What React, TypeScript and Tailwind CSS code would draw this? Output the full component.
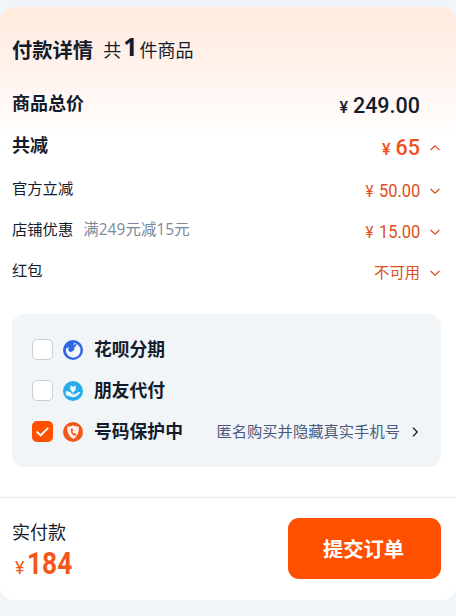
import type { ReactNode } from "react";

function Chevron({ className }: { className: string }) {
  return (
    <svg viewBox="0 0 12 12" className={className} fill="none" stroke="currentColor" strokeWidth="1.3">
      <path d="M1.600 4 6 8.200l4.400-4.200" />
    </svg>
  );
}

function HuabeiIcon() {
  return (
    <svg viewBox="0 0 20 20" className="size-5 shrink-0">
      <circle cx="10" cy="10" r="10" fill="#2f66e6" />
      <circle cx="10.2" cy="10.4" r="7.3" fill="#f2f6fd" />
      <path d="M3 4.500C5 2.400 8.300 2 11 3c-.7.9-.6 1.700-.1 2.400.6-1 1.500-1.500 2.600-1.300.1 1.600-.8 2.700-2.200 3 .5 2.200-.4 3.900-2.200 4.500-1.700.6-3.300-.2-3.700-1.700-.2-1 .2-1.800.9-2.300C5.300 7.200 4 7.500 3 8.200Z" fill="#2f66e6" />
    </svg>
  );
}

function FriendPayIcon() {
  return (
    <svg viewBox="0 0 20 20" className="size-5 shrink-0">
      <circle cx="10" cy="10" r="10" fill="#25adea" />
      <path d="M7.300 4.200 9 5.400h2l1.700-1.200v4.600l-1.500 1.500v.9H8.800v-.9L7.300 8.800Z" fill="#eef8fd" />
      <path d="M2.800 10.300c2.200-.5 4 .3 5.400 1.700h2.300c.9 0 .9 1.100 0 1.200l-2 .2 2.700.3 3.500-2.300c.9-.6 2.300-.5 2.700.2-1.700 2.600-4.300 4.600-7.500 4.600-3.400 0-4.500-1.800-7.100-1.900Z" fill="#eef8fd" />
      <path d="M8.300 12.700h2.600" stroke="#25adea" strokeWidth=".7" />
    </svg>
  );
}

function PhoneShieldIcon() {
  return (
    <svg viewBox="0 0 20 20" className="size-5 shrink-0">
      <circle cx="10" cy="10" r="10" fill="#f2581c" />
      <path d="M10 3.300c1.800 1 3.600 1.400 5.800 1.500.3 5.500-1.200 9.500-5.300 12.200C6.200 14.700 4 10.800 4.200 4.800 6.500 4.700 8.300 4.300 10 3.300Z" fill="#fff1e8" />
      <path d="m8 6.700 1.500-.2.7 2.100-.9.900c.3 1 .9 1.700 1.700 2.200l1-.6 1.500 1.300-.8 1.300c-3.200.2-5.600-3.400-4.700-7Z" fill="#f2581c" />
    </svg>
  );
}

function Checkbox({ checked = false }: { checked?: boolean }) {
  return checked ? (
    <span className="flex size-[21px] shrink-0 items-center justify-center rounded-[5px] bg-[#ff5000]">
      <svg viewBox="0 0 14 14" className="size-[15px]" fill="none" stroke="white" strokeWidth="1.900">
        <path d="m1.500 7 3.700 3.600 7.100-7" />
      </svg>
    </span>
  ) : (
    <span className="size-[21px] shrink-0 rounded-[5px] border border-[#c9ced6] bg-white" />
  );
}

function Discount({ label, note, children }: { label: string; note?: string; children: ReactNode }) {
  return (
    <div className="flex h-[41px] items-center text-[15.300px]">
      <span className="pb-[3px]">{label}</span>
      {note && <span className="ml-[10px] pb-[3px] font-['Open_Sans','Noto_Sans_CJK_SC'] text-[15.400px] tracking-[0.1px] text-[#7c889c]">{note}</span>}
      <span className="ml-auto flex items-center pt-px text-[#dc4f20]">
        {children}
        <Chevron className="ml-[9px] size-3" />
      </span>
    </div>
  );
}

function Amount({ value }: { value: string }) {
  return (
    <span className="flex origin-right scale-x-[.94] items-baseline pt-px font-['Roboto']">
      <span className="mr-[6px] text-[16px]">¥</span>
      <span className="text-[17.500px]">{value}</span>
    </span>
  );
}

function Option({ checked, icon, label, children }: { checked?: boolean; icon: ReactNode; label: string; children?: ReactNode }) {
  return (
    <div className="flex h-[41px] items-center">
      <Checkbox checked={checked} />
      <span className="ml-[10px] flex">{icon}</span>
      <span className="ml-[11px] pt-[2px] text-[17.800px] font-bold">{label}</span>
      {children}
    </div>
  );
}

export default function App() {
  return (
    <div className="h-[616px] w-[456px] overflow-hidden bg-[#f0f5fa] pt-[7px] font-['Liberation_Sans','Noto_Sans_CJK_SC',sans-serif] leading-none whitespace-nowrap text-[#131c2c]">
      <main className="flex h-[593px] flex-col rounded-[14px] bg-white bg-linear-to-b from-[#ffeadd] via-[#fff4ef] via-[12%] to-white to-[22%]">
        <section className="pr-[15px] pl-3">
          <header className="flex h-[86px] items-baseline pt-[29px]">
            <h1 className="text-[20.300px] font-bold">付款详情</h1>
            <span className="relative -top-px ml-[10px] text-[18px]">共</span>
            <strong className="relative -top-[2px] mx-[2px] font-['Open_Sans'] text-[25px]">1</strong>
            <span className="relative -top-px text-[18px]">件商品</span>
          </header>
          <div className="-mt-[11px] flex h-[42px] items-center justify-between pr-[21px] text-[18px] font-bold">
            <span className="pt-px">商品总价</span>
            <span className="flex items-baseline pt-[6px] font-['Roboto'] font-medium">
              <span className="mr-[5px] text-[16px]">¥</span>
              <span className="text-[21.500px]">249.00</span>
            </span>
          </div>
          <div className="flex h-[43px] items-center text-[18px] font-bold">
            <span>共减</span>
            <span className="ml-auto flex items-center pt-[4px] font-['Roboto'] font-medium text-[#ee501c]">
              <span className="flex items-baseline pt-px">
                <span className="mr-[5px] text-[16px]">¥</span>
                <span className="text-[21.500px]">65</span>
              </span>
              <Chevron className="ml-[9px] size-3 rotate-180" />
            </span>
          </div>
          <div className="pt-[3px]">
            <Discount label="官方立减"><Amount value="50.00" /></Discount>
            <Discount label="店铺优惠" note="满249元减15元"><Amount value="15.00" /></Discount>
            <Discount label="红包"><span>不可用</span></Discount>
          </div>
        </section>
        <section className="mx-3 mt-[21px] mr-[15px] h-[153px] rounded-[12px] bg-[#f1f5f8] px-5 pt-[15px]">
          <Option icon={<HuabeiIcon />} label="花呗分期" />
          <Option icon={<FriendPayIcon />} label="朋友代付" />
          <Option checked icon={<PhoneShieldIcon />} label="号码保护中">
            <span className="ml-auto text-[15.300px] text-[#4a5a7c]">匿名购买并隐藏真实手机号</span>
            <Chevron className="ml-[9px] size-3 -rotate-90" />
          </Option>
        </section>
        <footer className="mt-auto flex h-[103px] justify-between border-t border-[#e8eaed] pr-[15px] pl-3">
          <div className="pt-[26px]">
            <div className="text-[18px]">实付款</div>
            <div className="mt-[6px] ml-[3px] flex items-baseline font-['Roboto'] text-[#f2571b]">
              <span className="text-[18px]">¥</span>
              <strong className="ml-[3px] origin-left scale-x-[.85] text-[31px] font-bold">184</strong>
            </div>
          </div>
          <button className="mt-5 h-[61px] w-[153px] rounded-[11px] bg-[#ff5000] pt-[3px] pr-[2px] text-[20.300px] font-bold text-white">提交订单</button>
        </footer>
      </main>
    </div>
  );
}
